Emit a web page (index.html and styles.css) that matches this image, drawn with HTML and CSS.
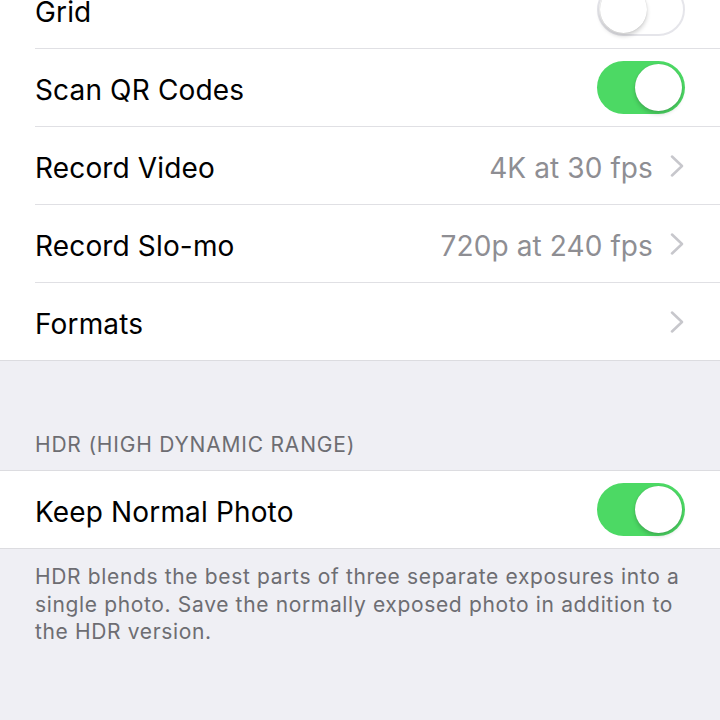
FILE: index.html
```html
<!DOCTYPE html>
<html>
<head>
<meta charset="utf-8">
<link rel="stylesheet" href="styles.css">
</head>
<body>
<div class="page">
  <div class="group first">
    <div class="row">
      <span class="label">Grid</span>
      <span class="toggle off"><span class="knob"></span></span>
    </div>
    <div class="row">
      <span class="label">Scan QR Codes</span>
      <span class="toggle on"><span class="knob"></span></span>
    </div>
    <div class="row">
      <span class="label">Record Video</span>
      <span class="value">4K at 30 fps</span>
      <svg class="chev" width="14" height="22" viewBox="0 0 14 22"><path d="M2 1.5 L12 11 L2 20.5" fill="none" stroke="#c7c7cc" stroke-width="2.5" stroke-linecap="round" stroke-linejoin="round"/></svg>
    </div>
    <div class="row">
      <span class="label">Record Slo-mo</span>
      <span class="value">720p at 240 fps</span>
      <svg class="chev" width="14" height="22" viewBox="0 0 14 22"><path d="M2 1.5 L12 11 L2 20.5" fill="none" stroke="#c7c7cc" stroke-width="2.5" stroke-linecap="round" stroke-linejoin="round"/></svg>
    </div>
    <div class="row">
      <span class="label">Formats</span>
      <span class="value"></span>
      <svg class="chev" width="14" height="22" viewBox="0 0 14 22"><path d="M2 1.5 L12 11 L2 20.5" fill="none" stroke="#c7c7cc" stroke-width="2.5" stroke-linecap="round" stroke-linejoin="round"/></svg>
    </div>
  </div>
  <div class="header">HDR (HIGH DYNAMIC RANGE)</div>
  <div class="group">
    <div class="row">
      <span class="label">Keep Normal Photo</span>
      <span class="toggle on"><span class="knob"></span></span>
    </div>
  </div>
  <div class="footer">HDR blends the best parts of three separate exposures into a single photo. Save the normally exposed photo in addition to the HDR version.</div>
</div>
</body>
</html>
```
FILE: styles.css
```css
html, body {
  margin: 0;
  padding: 0;
  background: #efeff4;
  font-family: Inter, "Liberation Sans", sans-serif;
}
.page {
  width: 720px;
  height: 720px;
  overflow: hidden;
}
.group {
  background: #fff;
  border-top: 1px solid #dcdce0;
  border-bottom: 1px solid #dcdce0;
}
.group.first {
  margin-top: -29px;
  border-top: none;
}
.row {
  height: 77px;
  margin-left: 35px;
  padding-right: 35px;
  display: flex;
  align-items: center;
  border-bottom: 1px solid #e0e0e4;
}
.row:last-child {
  border-bottom: none;
}
.label {
  flex: 1;
  font-size: 28px;
  line-height: 34px;
  padding-top: 4px;
  color: #000;
  letter-spacing: 0.15px;
}
.value {
  font-size: 28px;
  line-height: 34px;
  padding-top: 4px;
  color: #8e8e93;
  margin-right: 17px;
  letter-spacing: 0.1px;
}
.chev {
  display: block;
  margin-right: 1px;
}
.toggle {
  position: relative;
  width: 88px;
  height: 53px;
  border-radius: 27px;
  box-sizing: border-box;
}
.toggle.on {
  background: #4cd964;
}
.toggle.off {
  background: #fff;
  border: 2px solid #e5e5ea;
}
.knob {
  position: absolute;
  width: 47px;
  height: 47px;
  border-radius: 50%;
  background: #fff;
  box-shadow: 0 3px 4px rgba(0,0,0,0.18), 0 0 1px rgba(0,0,0,0.2);
}
.toggle.on .knob {
  top: 3px;
  right: 3px;
}
.toggle.off .knob {
  top: 1px;
  left: 1px;
}
.header {
  padding: 70px 35px 12px;
  font-size: 21px;
  color: #6d6d72;
  line-height: 27px;
  letter-spacing: 0.8px;
}
.footer {
  padding: 14px 35px 0;
  font-size: 21px;
  line-height: 27.5px;
  color: #6d6d72;
  letter-spacing: 0.65px;
}
```
